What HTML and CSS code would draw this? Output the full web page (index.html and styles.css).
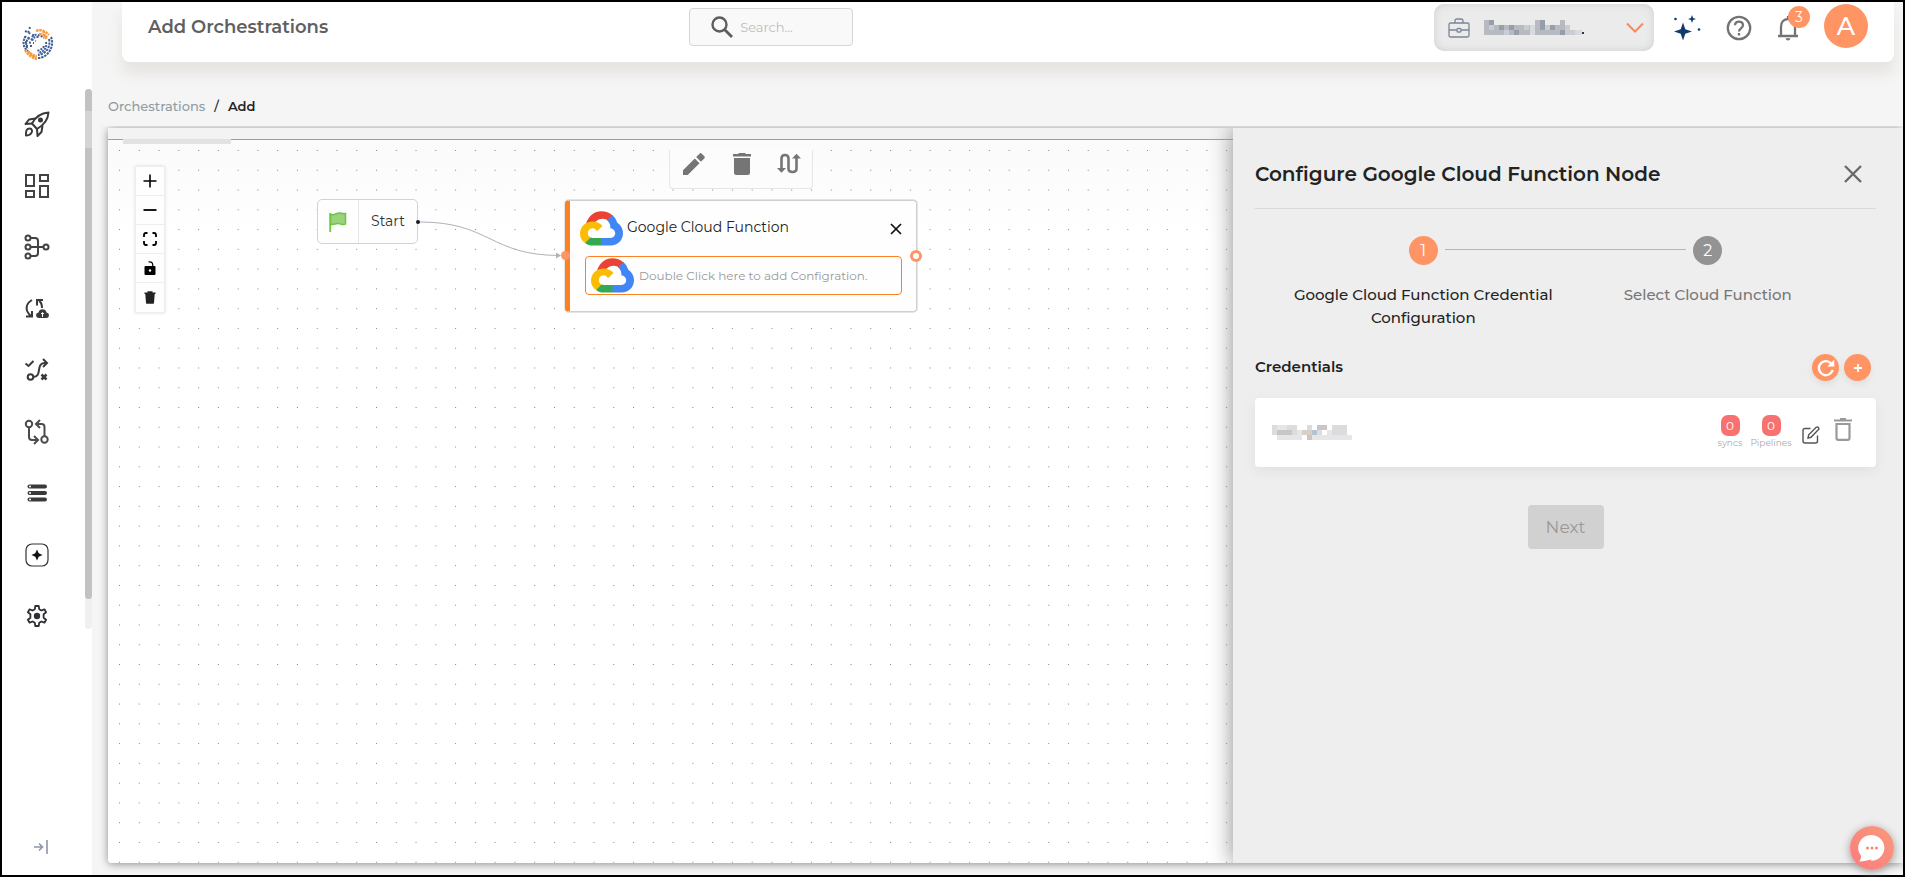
FILE: index.html
```html
<!DOCTYPE html>
<html lang="en">
<head>
<meta charset="utf-8">
<meta name="viewport" content="width=device-width, initial-scale=1">
<title>Add Orchestrations</title>
<link rel="stylesheet" href="styles.css">
</head>
<body>
<svg class="defs" aria-hidden="true">
  <symbol id="gcloud" viewBox="0 0 43 35">
    <path fill="#ea4335" d="M28.6 9.7l3.7-3.7.2-1.600C26.500-1 16.500-1.400 10.600 4.800 8.500 6.900 6.800 9.800 6 12.700l1.500-.2 7.500-1.200.6-.6c3.300-3.600 8.900-4.100 13-1z"/>
    <path fill="#4285f4" d="M37.300 11.800c-.9-3.100-2.600-5.800-5-7.900L27 9.200c2.200 1.800 3.500 4.500 3.400 7.300v.9c2.600 0 4.800 2.100 4.800 4.800s-2.200 4.700-4.800 4.700H21.500l-.9 1v5.700l.9 1h8.900c8 0 12.600-5.600 12.600-12.500 0-4.300-2.100-8-5.700-10.300z"/>
    <path fill="#34a853" d="M12.500 34.600h9v-7.700h-9c-.7 0-1.300-.1-1.900-.4l-1.400.4-3.800 3.700-.3 1.300c2.100 1.700 4.700 2.700 7.400 2.700z"/>
    <path fill="#fbbc05" d="M12.500 10.600C5.600 10.700 0 16 0 22.700c0 3.700 1.900 7.100 5.100 9.300l5.500-5.500c-2.400-1.100-3.400-3.900-2.400-6.300s4-3.500 6.400-2.400c1 .5 1.900 1.300 2.400 2.400l5.500-5.100c-2.400-3-6-4.600-10-4.500z"/>
  </symbol>
</svg>

<aside class="sidebar">
  <a class="logo" href="#" aria-label="Home">
    <svg width="32" height="34" viewBox="0 0 32 34" fill="none">
      <g stroke="#3f5f95" stroke-width="2">
        <path stroke-dasharray="2.200 1" d="M4 10C0 15 1 22 6 25"/>
        <path stroke-dasharray="2.200 1" d="M7 11c-3 4-4 8-1 12"/>
        <path stroke-dasharray="2 1.200" d="M10 11c3-4 8-2 12 1"/>
        <path stroke-dasharray="2 1.200" d="M9 14c3-3 5-3 8-3"/>
        <path stroke-dasharray="2.400 .9" d="M29 11c4 9-3 21-13 21"/>
        <path stroke-dasharray="2.400 1" d="M27 13c2 8-3 15-11 16"/>
        <path stroke-dasharray="2 1" d="M24 16c1 6-2 10-8 11"/>
        <path stroke-dasharray="2 1.200" d="M22 20c-1 3-4 4-7 5"/>
        <path stroke-dasharray="2 2" d="M3 5l10 5M8 1l-2 6M2 11l12 4M3 16l9 1M4 20l6 0"/>
      </g>
      <g stroke="#f89a3c" stroke-width="2.400">
        <path stroke-dasharray="2.600 .7" d="M14 5c5-2 9 0 13 4M17 8c4 0 6 2 9 4M21 5l3 8"/>
        <path stroke-dasharray="2.600 .7" d="M3 24c3 5 7 8 12 9M6 25c2 3 5 5 9 5M8 27l6 5"/>
      </g>
    </svg>
  </a>
  <div class="nav-area">
    <nav class="nav" aria-label="Main">
      <a href="#" aria-label="Launch"><svg width="26" height="26" viewBox="0 0 26 26" fill="none" stroke="#3a3a3c" stroke-width="2" stroke-linejoin="round"><path d="M24.500 1.500C17 2 12 5 8 12.500L13 18c7-4 11-9 11.500-16.500z"/><path d="M11.500 7.500L5 8.500 1.500 13l6.500-.5M18.500 14.500l-1 6.500-4 4-.5-7"/><path d="M2 24.500c-.5-5 1-7 3.500-7s3.500 3 1.500 5c-1 1.500-3 2-5 2z"/><circle cx="16.500" cy="9" r="1.500" fill="#3a3a3c"/></svg></a>
      <a href="#" aria-label="Dashboard"><svg width="26" height="26" viewBox="0 0 26 26" fill="none" stroke="#434345" stroke-width="2"><path d="M2 2h8v11H2zM16 2h8v6h-8zM2 18h8v6H2zM16 13h8v11h-8z"/></svg></a>
      <a href="#" aria-label="Pipelines"><svg width="26" height="26" viewBox="0 0 26 26" fill="none" stroke="#434345" stroke-width="2"><circle cx="4" cy="4" r="2.500"/><circle cx="4" cy="13" r="2.500"/><circle cx="4" cy="22" r="2.500"/><circle cx="22" cy="13" r="2.500"/><path d="M6.500 4H11q3 0 3 3v12q0 3-3 3H6.500M6.500 13h13"/></svg></a>
      <a href="#" aria-label="Syncs"><svg width="26" height="26" viewBox="0 0 26 26" fill="none" stroke="#3a3a3c" stroke-width="2"><path d="M8 4C1 8 1 15 7 20M2 20.500h6V15M18 12c0-4-1-6-3-7M13 9.500V4h6"/><path fill="#3a3a3c" stroke="none" d="M15 22c-3.500 0-4-5-.5-5.500C15 12 22 12 22.500 16.500c3.500.5 3 5.500 0 5.500z"/><path stroke="#fff" stroke-width="1" d="M18.500 21v-4M17 18l1.500-1.500L20 18"/></svg></a>
      <a href="#" aria-label="Orchestrations"><svg width="26" height="26" viewBox="0 0 26 26" fill="none" stroke="#3a3a3c" stroke-width="2"><path d="M1.500 6.500l3 2.500L9.500 4"/><circle cx="6.500" cy="20" r="2.800"/><path d="M9.500 20c9 0 2-14 11-14h2M19 2l4 4-4 4"/><path stroke-width="2.500" d="M17.500 17.500l5 5M22.500 17.500l-5 5"/></svg></a>
      <a href="#" aria-label="Compare"><svg width="26" height="26" viewBox="0 0 26 26" fill="none" stroke="#4b4b4d" stroke-width="2"><circle cx="5" cy="5" r="3.200"/><circle cx="20.500" cy="20.500" r="3.200"/><path d="M5 8.500V18q0 3 3 3h5M10 17l4 4-4 4M20.500 17V8q0-3-3-3H12M16 1l-4 4 4 4"/></svg></a>
      <a href="#" aria-label="Data"><svg width="26" height="26" viewBox="0 0 26 26"><g fill="#3a3a3c"><rect x="3.500" y="4.500" width="19.500" height="4" rx="2"/><rect x="3.500" y="11" width="19.500" height="4" rx="2"/><rect x="3.500" y="17.500" width="19.500" height="4" rx="2"/></g><g fill="#fff"><circle cx="6" cy="6.500" r="1"/><circle cx="6" cy="13" r="1"/><circle cx="6" cy="19.500" r="1"/></g></svg></a>
      <a href="#" aria-label="Assistant"><svg width="26" height="26" viewBox="0 0 26 26"><rect x="2" y="2" width="22" height="22" rx="6" fill="none" stroke="#333" stroke-width="1.200"/><path fill="#111" d="M13 7.500l1.700 3.800 3.800 1.700-3.800 1.700L13 18.500l-1.700-3.800L7.500 13l3.800-1.700z"/></svg></a>
      <a href="#" aria-label="Settings"><svg width="26" height="26" viewBox="0 0 26 26"><path fill="none" stroke="#2f2f33" stroke-width="1.800" stroke-linejoin="round" d="M11.300 3h3.400l.5 3.200 2.200 1.300 3-1.200 1.700 2.900-2.500 2.100v3.400l2.500 2.100-1.700 2.900-3-1.200-2.200 1.300-.5 3.200h-3.400l-.5-3.200-2.200-1.300-3 1.200-1.700-2.900 2.500-2.100v-3.400L3.900 9.200l1.700-2.900 3 1.200 2.200-1.300z"/><circle cx="13" cy="13" r="3.200" fill="#2f2f33"/></svg></a>
    </nav>
    <div class="scroll-track"><div class="scroll-thumb"></div></div>
  </div>
  <button class="expand" aria-label="Expand menu"><svg width="16" height="14" viewBox="0 0 16 14" fill="none" stroke="#8d97a8" stroke-width="1.600"><path d="M1 7h8M6 3.500L9.500 7 6 10.500M14 0v14"/></svg></button>
</aside>

<div class="main">
  <header class="topbar">
    <h1 class="page-title">Add Orchestrations</h1>
    <label class="search">
      <svg width="24" height="24" viewBox="0 0 24 24" fill="none" stroke="#5d5d5d"><circle cx="9.500" cy="9.500" r="7" stroke-width="2.400"/><path stroke-width="2.800" d="M14.500 14.500L22 22"/></svg>
      <input type="search" placeholder="Search..." aria-label="Search">
    </label>
    <div class="tools">
      <div class="workspace-picker">
        <select aria-label="Workspace"><option></option></select>
        <svg class="briefcase" width="22" height="20" viewBox="0 0 22 20" fill="none" stroke="#7b8797" stroke-width="1.300"><rect x="1" y="5" width="20" height="14" rx="1.500"/><path d="M7 5V3q0-2 2-2h4q2 0 2 2v2M1 12h8M13 12h8"/><rect x="9" y="10.500" width="4" height="3.500" rx="1"/></svg>
        <svg class="masked" width="102" height="16" viewBox="0 0 102 16"><g fill="#b7bbc1"><path d="M0 0h5v15H0zM5 5h41v10H5zM51 0h10v5H51zM51 5h30v10H51zM76 0h5v5h-5z"/></g><path fill="#969eaa" d="M5 0h5v5H5zM15 5h5v5h-5zM25 5h5v5h-5zM30 10h5v5h-5zM56 0h5v10h-5zM66 5h5v5h-5zM76 10h5v5h-5z"/><path fill="#c9ccd0" d="M5 5h5v5H5zM20 10h5v5h-5zM40 5h5v5h-5zM61 5h5v5h-5zM81 5h5v10h-5zM86 10h5v5h-5z"/><path fill="#d8dadd" d="M46 5h5v10h-5zM91 10h7v5h-7z"/><path fill="#26334a" d="M98 12h2v2h-2z"/></svg>
        <svg class="chevron" width="18" height="12" viewBox="0 0 18 12" fill="none" stroke="#f58a5c" stroke-width="2"><path d="M1 1.500l8 8 8-8"/></svg>
      </div>
      <button class="icon-btn" aria-label="AI assistant"><svg width="28" height="28" viewBox="0 0 28 28" fill="#123a6d"><path d="M10 8.500l2.300 6.700 6.700 2.300-6.700 2.300L10 26.500l-2.300-6.700L1 17.500l6.700-2.300zM19 1l1.100 2.900L23 5l-2.900 1.100L19 9l-1.100-2.900L15 5l2.900-1.100z"/><circle cx="2.500" cy="5" r="1.300"/><circle cx="26" cy="15.500" r="1.300"/></svg></button>
      <button class="icon-btn" aria-label="Help"><svg width="26" height="26" viewBox="0 0 26 26" fill="none" stroke="#737373" stroke-width="2.300"><circle cx="13" cy="13" r="11.200"/><path d="M9 10.300c0-5 8-5 8 0 0 3-4 3.200-4 6.200"/><path d="M13 18v2.500"/></svg></button>
      <button class="icon-btn" aria-label="Notifications"><svg width="22" height="26" viewBox="0 0 22 26" fill="none" stroke="#737373" stroke-width="2.300"><path d="M1 21h20M4 21V12c0-5 3-8 7-8s7 3 7 8v9M11 1v3"/><path fill="#737373" stroke="none" d="M8.500 23.200h5q-.5 2.300-2.500 2.300t-2.500-2.300z"/></svg><span class="count">3</span></button>
      <button class="avatar" aria-label="Account">A</button>
    </div>
  </header>

  <nav class="crumbs" aria-label="Breadcrumb"><a href="#">Orchestrations</a><span>/</span><b>Add</b></nav>

  <div class="stage">
    <section class="board" aria-label="Flow">
      <div class="board-head"><div class="board-tab"></div></div>
      <div class="canvas">
        <svg class="dots" aria-hidden="true">
          <defs><pattern id="grid" x="11" y="10" width="19.770" height="19.770" patternUnits="userSpaceOnUse"><circle cx=".5" cy=".5" r=".6" fill="#858585"/></pattern></defs>
          <rect width="100%" height="100%" fill="url(#grid)"/>
          <path d="M312 82C382 82 382 115.500 452 115.500" fill="none" stroke="#b1b1b7"/>
          <path d="M448 112.500l5 3-5 3z" fill="#b1b1b7"/>
        </svg>

        <div class="controls">
          <button aria-label="Zoom in"><svg width="14" height="14" viewBox="0 0 14 14" stroke="#000" stroke-width="1.600"><path d="M7 .5v13M.5 7h13"/></svg></button>
          <button aria-label="Zoom out"><svg width="14" height="14" viewBox="0 0 14 14" stroke="#000" stroke-width="1.800"><path d="M.5 7h13"/></svg></button>
          <button aria-label="Fit view"><svg width="14" height="14" viewBox="0 0 14 14" fill="none" stroke="#000" stroke-width="1.800"><path d="M1 5V3q0-2 2-2h1.500M9.500 1H11q2 0 2 2v2M13 9v2q0 2-2 2H9.500M4.500 13H3q-2 0-2-2V9"/></svg></button>
          <button aria-label="Lock"><svg width="12" height="14" viewBox="0 0 12 14"><rect x=".5" y="5" width="11" height="9" rx="1"/><path d="M4.500 1Q9 0 8.800 5" fill="none" stroke="#000" stroke-width="1.200"/><circle cx="6" cy="9.500" r="1.200" fill="#fff"/></svg></button>
          <button aria-label="Delete"><svg width="12" height="13" viewBox="0 0 12 13" fill="#222"><path d="M.5 1.500h11V3h-11zM3.500.2h5V1.500h-5zM1.300 3h9.400L10 12q0 .8-.8.8H2.800q-.8 0-.8-.8z"/></svg></button>
        </div>

        <div class="start-node">
          <div class="start-icon"><svg width="18" height="20" viewBox="0 0 18 20"><path d="M1.500 2.500c5 1 6-2 9-1.500s4 1 6 .5V12c-3 2-5-1-8-.5s-5 1.500-7 .8z" fill="#9ad37c" stroke="#6cc644" stroke-width="1.500"/><path d="M1.200 1v19" stroke="#6cc644" stroke-width="1.800"/></svg></div>
          <span>Start</span>
          <i class="dot"></i>
        </div>

        <div class="node-tools">
          <button aria-label="Edit node"><svg width="24" height="24" viewBox="0 0 24 24" fill="#757575"><path d="M1 18.300V23h4.700L17.500 11.200l-4.700-4.700zM22.500 6.200q.9-.9 0-1.800l-2.900-2.900q-.9-.9-1.800 0L14.200 5l4.700 4.700z"/></svg></button>
          <button aria-label="Remove node"><svg width="24" height="24" viewBox="0 0 24 24" fill="#757575"><path d="M4 20.500Q4 23 6.500 23h11q2.500 0 2.500-2.500V6H4zM21 2h-5l-1-1H9L8 2H3v2.500h18z"/></svg></button>
          <button aria-label="Swap direction"><svg width="24" height="24" viewBox="0 0 24 24" fill="none" stroke="#757575" stroke-width="2.600"><path d="M4.500 17V6.500q0-3.500 3.500-3.500t3.500 3.500v10q0 3.500 4 3.500t4-3.500V5"/><path fill="#757575" stroke="none" d="M0 16h9l-4.500 4.800zM15 6.500h9L19.500 1.800z"/></svg></button>
        </div>

        <article class="fn-node">
          <header>
            <svg width="43" height="35"><use href="#gcloud"/></svg>
            <h2>Google Cloud Function</h2>
            <button aria-label="Close node"><svg width="12" height="12" viewBox="0 0 12 12" stroke="#111" stroke-width="1.700"><path d="M1 1l10 10M11 1L1 11"/></svg></button>
          </header>
          <button class="fn-config"><svg width="43" height="35"><use href="#gcloud"/></svg><span>Double Click here to add Configration.</span></button>
          <i class="port-in"></i><i class="port-out"></i>
        </article>
      </div>
    </section>

    <aside class="panel">
      <header class="panel-head">
        <h2>Configure Google Cloud Function Node</h2>
        <button aria-label="Close panel"><svg width="18" height="18" viewBox="0 0 18 18" stroke="#6a6a6a" stroke-width="2.400"><path d="M1 1l16 16M17 1L1 17"/></svg></button>
      </header>
      <ol class="steps">
        <li class="current"><span class="num">1</span><span class="step-label">Google Cloud Function Credential Configuration</span></li>
        <li><span class="num">2</span><span class="step-label">Select Cloud Function</span></li>
      </ol>
      <div class="cred-head">
        <h3>Credentials</h3>
        <button class="round" aria-label="Refresh"><svg width="18" height="18" viewBox="0 0 18 18" fill="none" stroke="#fff" stroke-width="2.400"><path d="M14 4.300A7 7 0 1 0 15.700 11"/><path fill="#fff" stroke="none" d="M17.300.5v7h-7z"/></svg></button>
        <button class="round" aria-label="Add credential"><svg width="10" height="10" viewBox="0 0 10 10" stroke="#fff" stroke-width="1.800"><path d="M5 1v8M1 5h8"/></svg></button>
      </div>
      <div class="cred-card">
        <svg class="cred-name" width="80" height="15" viewBox="0 0 80 15"><path fill="#dcdcde" d="M0 0h5v10H0zM15 0h10v10H15zM35 0h5v5h-5zM60 0h15v10H60zM45 5h5v5h-5z"/><path fill="#c9c6c8" d="M5 5h15v5H5zM50 0h5v5h-5zM35 10h5v5h-5zM45 0h5v5h-5z"/><path fill="#e6e6e8" d="M5 0h10v5H5zM5 10h25v5H5zM40 10h40v5H40zM25 5h5v5h-5zM55 5h5v5h-5z"/><path fill="#b3c3d2" d="M40 5h5v5h-5z"/><path fill="#d8d0c4" d="M30 5h10v5H30z"/></svg>
        <div class="stat"><b>0</b><span>syncs</span></div>
        <div class="stat"><b>0</b><span>Pipelines</span></div>
        <button class="edit" aria-label="Edit credential"><svg width="18" height="18" viewBox="0 0 18 18" fill="none" stroke="#555" stroke-width="1.400"><path d="M8.500 2.500H3q-2 0-2 2V15q0 2 2 2h10.500q2 0 2-2V9.500"/><path d="M6 12l.7-3.200L14.200 1.300q1-.8 1.900 0l.4.500q.8.900 0 1.800L9 11.300z"/></svg></button>
        <button class="remove" aria-label="Delete credential"><svg width="18" height="23" viewBox="0 0 18 23" fill="none" stroke="#999" stroke-width="2.200"><path d="M2.500 6v14q0 1.800 1.800 1.800h9.400q1.800 0 1.800-1.800V6zM0 2.500h18M6 1h6"/></svg></button>
      </div>
      <button class="next" disabled>Next</button>
    </aside>
  </div>
</div>

<button class="chat" aria-label="Chat"><svg width="28" height="28" viewBox="0 0 28 28"><path fill="#fff" d="M14 1a13 12.800 0 1 1-1.500 25.700c1-.5 1-.9.8-1.200-3 .8-7 1.600-12 2 1.500-2 2-4 1.600-6A13 12.800 0 0 1 14 1z"/><g fill="#f9866f"><circle cx="9.500" cy="14" r="1.500"/><circle cx="14" cy="14" r="1.500"/><circle cx="18.500" cy="14" r="1.500"/></g></svg></button>
</body>
</html>
```

FILE: styles.css
```css
* { box-sizing: border-box; }

body {
  margin: 0;
  min-height: 100vh;
  display: flex;
  border: 2px solid #000;
  background: #f5f5f5;
  font-family: Montserrat, Inter, "Open Sans", sans-serif;
  color: #222;
}

svg { display: block; flex: none; }
h1, h2, h3 { margin: 0; }
button { border: 0; padding: 0; background: none; font: inherit; color: inherit; display: flex; align-items: center; justify-content: center; }
.defs { position: absolute; width: 0; height: 0; }

/* Sidebar */
.sidebar { flex: 0 0 90px; background: #fff; display: flex; flex-direction: column; padding: 24px 0 21px; }
.logo { margin-left: 20px; }
.nav-area { display: flex; justify-content: space-between; height: 540px; margin-top: 29px; }
.nav { display: flex; flex-direction: column; justify-content: space-between; padding: 22px 0 0 22px; }
.scroll-track { width: 7px; background: #f0f0f0; border-radius: 4px; }
.scroll-thumb { height: 510px; border-radius: 4px; background: linear-gradient(#c2c2c2 22px, #d4d4d4 22px, #d4d4d4 59px, #c2c2c2 59px); }
.expand { margin: auto 0 0 31px; align-self: flex-start; }

/* Top bar */
.main { flex: 1; min-width: 0; display: flex; flex-direction: column; }
.topbar {
  height: 60px;
  margin: 0 9px 0 30px;
  padding: 0 26px 0 26px;
  display: grid;
  grid-template-columns: 8fr 164px 15fr;
  background: #fff;
  border-radius: 0 0 8px 8px;
  box-shadow: 0 12px 14px #e6e4e1;
}
.page-title { font-size: 18px; line-height: 24px; font-weight: 600; color: #606060; padding-top: 13px; }
.search { height: 38px; margin-top: 6px; padding: 0 8px 0 20px; display: flex; align-items: center; gap: 6px; border: 1px solid #d6d6d6; border-radius: 4px; background: #f9f9f9; }
.search input { min-width: 0; width: 100%; border: 0; padding: 0; outline: 0; background: none; font: 13px Montserrat, Inter, sans-serif; }
.search input::placeholder { color: #bdbdbd; opacity: 1; }
.tools { display: flex; justify-content: flex-end; align-items: flex-start; padding-top: 2px; }
.workspace-picker { position: relative; width: 220px; height: 47px; padding: 0 10px 0 14px; display: flex; align-items: center; border-radius: 10px; background: #ebebeb; box-shadow: inset 0 0 8px #cfcfcf; margin-right: 19px; }
.workspace-picker select { position: absolute; inset: 0; width: 100%; height: 100%; appearance: none; border: 0; background: none; }
.workspace-picker svg { pointer-events: none; }
.masked { margin-left: 14px; }
.chevron { margin-left: auto; }
.icon-btn { height: 47px; margin-right: 25px; position: relative; }
.count { position: absolute; left: 11px; top: 2px; width: 22px; height: 22px; border-radius: 50%; background: #ff9465; color: #fff; font-size: 14px; line-height: 22px; text-align: center; }
.avatar { width: 44px; height: 44px; border-radius: 50%; background: #ff9465; color: #fff; font-size: 25px; font-weight: 500; }

.crumbs { display: flex; gap: 9px; padding: 34px 16px 12px; font-size: 13px; line-height: 20px; font-weight: 500; }
.crumbs a { color: #8f9ba5; text-decoration: none; }
.crumbs b { font-weight: 600; }

/* Flow board */
.stage { flex: 1; display: flex; margin: 0 0 12px 16px; border-radius: 4px; box-shadow: 0 1px 8px #8c8c8c; clip-path: inset(-2px 0 -12px -10px); }
.board { flex: 1; min-width: 0; display: flex; flex-direction: column; background: linear-gradient(#fafafa, #fff 110px); border-radius: 4px; }
.board-head { height: 12px; background: #f3f3f3; border-bottom: 1px solid #9e9e9e; padding: 11px 0 0 15px; }
.board-tab { position: relative; width: 108px; height: 5px; background: #e2e2e2; }
.canvas { flex: 1; position: relative; }
.dots { position: absolute; inset: 0; width: 100%; height: 100%; }

.controls { position: absolute; left: 27px; top: 26px; width: 30px; border: 1px solid #eee; background: #fefefe; box-shadow: 0 0 3px #ddd; }
.controls button { width: 28px; height: 29px; border-bottom: 1px solid #eee; }
.controls button:last-child { border: 0; }

.start-node { position: absolute; left: 209px; top: 59px; width: 101px; height: 45px; display: flex; border: 1px solid #d3d3d3; border-radius: 5px; background: #fefefe; font-size: 14px; color: #333; }
.start-icon { width: 41px; border-right: 1px solid #e6e6e6; display: flex; align-items: center; justify-content: center; }
.start-node span { flex: 1; text-align: center; line-height: 43px; }
.dot { position: absolute; right: -3px; top: 20px; width: 4px; height: 4px; border-radius: 50%; background: #1a192b; }

.node-tools { position: absolute; left: 561px; top: 10px; width: 144px; height: 39px; padding: 2px 11px 12px 12px; display: flex; justify-content: space-between; border: 1px solid #e6e6e6; border-top: 0; border-radius: 0 0 4px 4px; background: #fcfcfc; }

.fn-node { position: absolute; left: 457px; top: 60px; width: 352px; height: 112px; padding: 10px 14px 0 10px; border: 1px solid #d0d0d0; border-left: 5px solid #fb8122; border-radius: 4px; box-shadow: 0 0 0 1px #e4e4e4; background: #fefefe; }
.fn-node header { display: flex; align-items: center; gap: 4px; height: 35px; }
.fn-node h2 { flex: 1; font-size: 14px; font-weight: 400; color: #222; padding-bottom: 3px; }
.fn-config { width: 317px; height: 39px; margin: 10px 0 0 5px; padding-left: 5px; gap: 5px; justify-content: flex-start; border: 1px solid #fb8122; border-radius: 4px; font-size: 12px; color: #999; }
.port-in { position: absolute; left: -9px; top: 50px; width: 9px; height: 9px; border-radius: 50%; background: #ff9465; }
.port-out { position: absolute; right: -6px; top: 49px; width: 12px; height: 12px; border-radius: 50%; border: 3px solid #ff9465; background: #fff; }

/* Configuration panel */
.panel { flex: 0 0 670px; padding: 0 27px 0 22px; background: #eee; box-shadow: 0 0 22px #8a8a8a; clip-path: inset(0 0 0 -30px); display: flex; flex-direction: column; }
.panel-head { display: flex; justify-content: space-between; align-items: center; height: 81px; padding: 11px 14px 0 0; border-bottom: 1px solid #d9d9d9; }
.panel-head h2 { font-size: 20px; font-weight: 600; }
.steps { list-style: none; margin: 27px 26px 0; padding: 0; display: flex; }
.steps li { flex: 1; position: relative; display: flex; flex-direction: column; align-items: center; gap: 18px; color: #777; }
.steps .current { color: #222; }
.steps .current::after { content: ""; position: absolute; left: calc(50% + 22px); top: 13px; width: calc(100% - 44px); height: 1px; background: #b5b5b5; }
.num { width: 29px; height: 29px; border-radius: 50%; background: #939393; color: #fff; font-size: 16px; line-height: 29px; text-align: center; }
.current .num { background: #ff9465; }
.step-label { font-size: 15px; line-height: 23px; font-weight: 500; text-align: center; }
.cred-head { display: flex; align-items: center; gap: 5px; margin-top: 25px; padding-right: 5px; }
.cred-head h3 { flex: 1; font-size: 15px; font-weight: 600; padding-bottom: 2px; }
.round { width: 27px; height: 27px; border-radius: 50%; background: #ff9465; box-shadow: 0 3px 6px #ddd; }
.cred-card { display: flex; align-items: center; height: 69px; margin-top: 17px; padding: 0 24px 0 17px; background: #fff; border-radius: 4px; box-shadow: 0 4px 12px #e0e0e0; }
.cred-name { margin-right: auto; }
.stat { display: flex; flex-direction: column; align-items: center; font-size: 9px; line-height: 14px; color: #aaa; margin-right: 8px; width: 42px; }
.stat + .stat { margin: 0 10px 0 -9px; }
.stat b { width: 19px; height: 21px; border-radius: 7px; background: #f87171; color: #fff; font-size: 12px; font-weight: 400; line-height: 21px; text-align: center; }
.edit { padding-top: 4px; margin-right: 14px; }
.remove { padding-bottom: 6px; }
.next { align-self: center; width: 76px; height: 44px; margin-top: 38px; border-radius: 4px; background: #d1d1d1; color: #999; font-size: 17px; }

.chat { position: fixed; right: 11px; bottom: 7px; width: 44px; height: 44px; border-radius: 50%; background: linear-gradient(45deg, #fb7b80, #f89a7a); box-shadow: 0 2px 8px #999; }
```
